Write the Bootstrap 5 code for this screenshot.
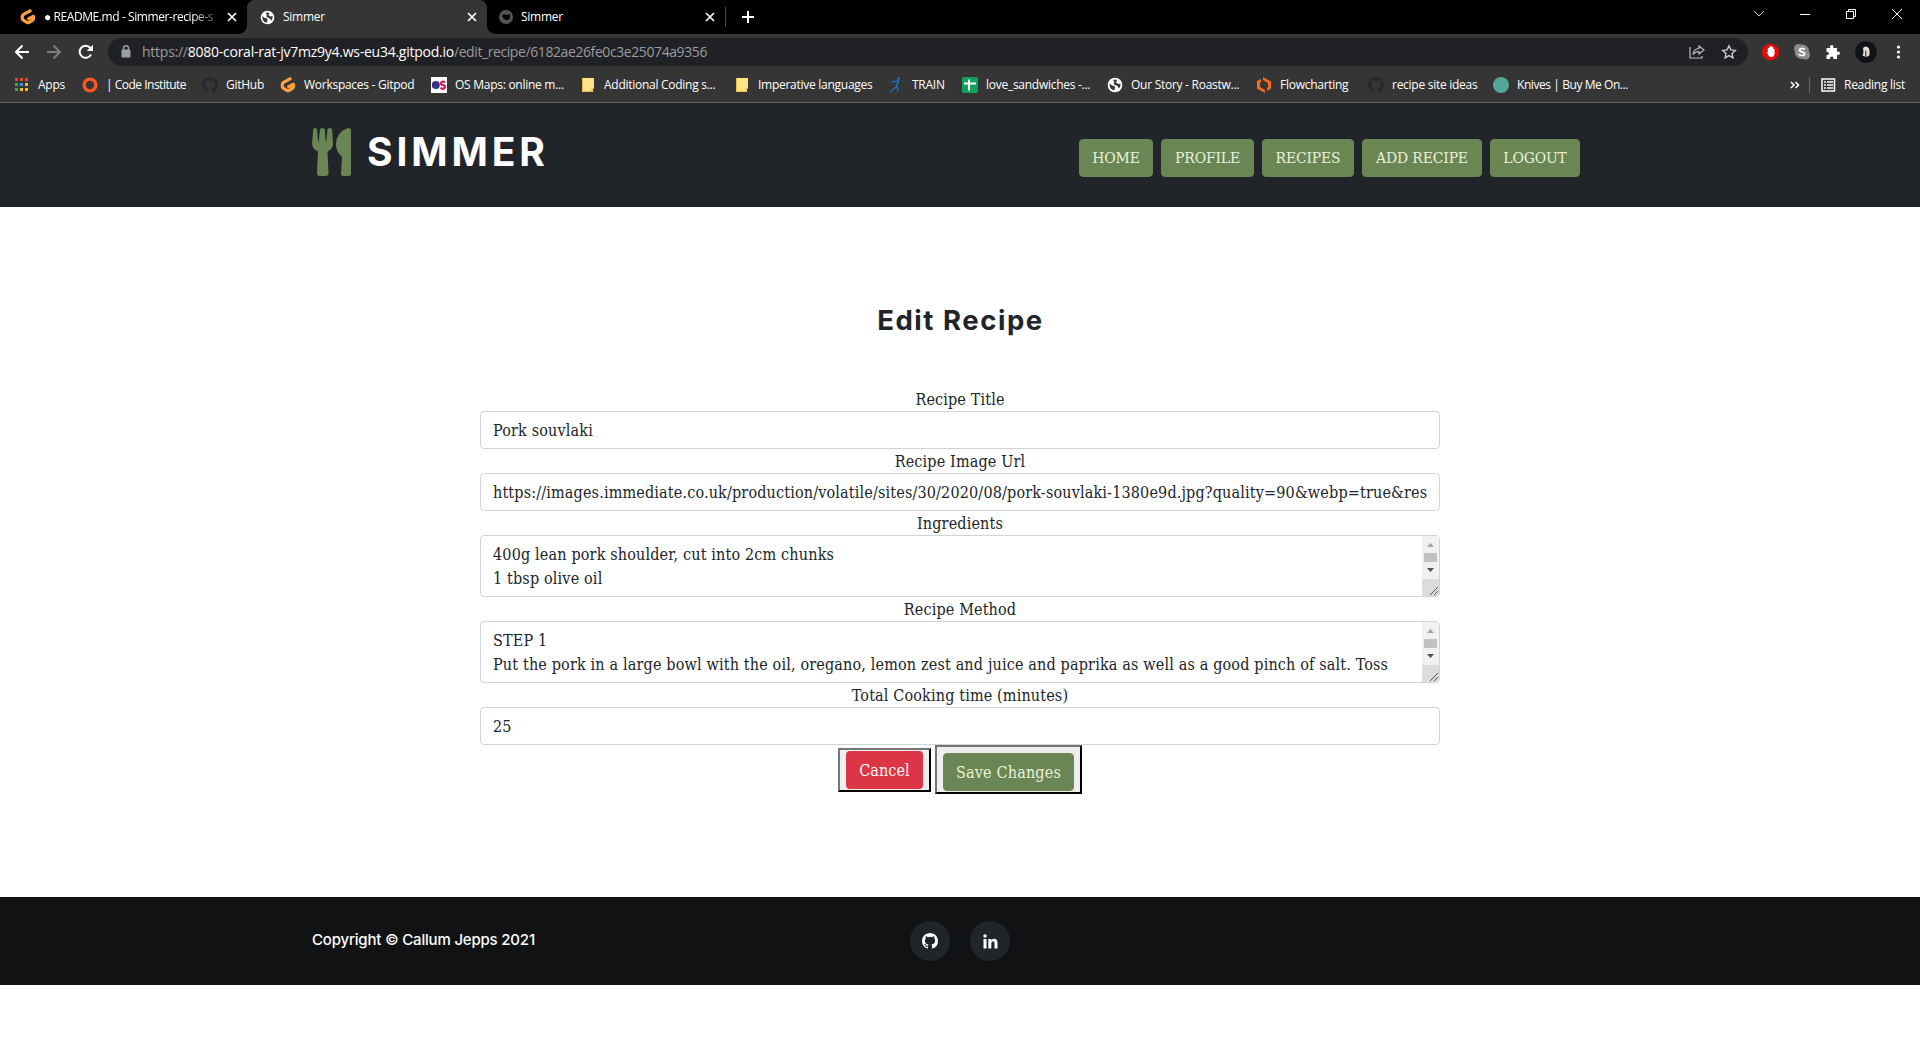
<!DOCTYPE html>
<html lang="en">
<head>
<meta charset="utf-8">
<title>Simmer</title>
<link href="https://cdn.jsdelivr.net/npm/bootstrap@5.3.0/dist/css/bootstrap.min.css" rel="stylesheet">
<style>
:root{--moss:#6b8655;--ink:#212529}
body{font-family:"DejaVu Serif Condensed","DejaVu Serif",serif;font-stretch:condensed;letter-spacing:.15px;color:var(--ink);background:#fff;overflow:hidden}
svg{display:block;flex:none}
/* browser window */
.browser{font:12px/16px "Open Sans",sans-serif;letter-spacing:-.27px;color:#fff;background:#353535;height:103px;border-bottom:1px solid #65666a}
.tabstrip{height:34px;background:#000}
.tab-item{height:34px;padding-right:7px}
.tab-item svg.shut{margin-left:auto}
.tab-a{width:247px;padding-left:20px}
.tab-b{width:240px;padding-left:13px;background:#353535;border-radius:8px 8px 0 0;position:relative}
.tab-b::before,.tab-b::after{content:"";position:absolute;bottom:0;width:8px;height:8px}
.tab-b::before{left:-8px;background:radial-gradient(circle at 0 0,#000 7.5px,#353535 8px)}
.tab-b::after{right:-8px;background:radial-gradient(circle at 100% 0,#000 7.5px,#353535 8px)}
.tab-c{width:238px;padding-left:12px}
.fade-title{width:185px;letter-spacing:-.42px;margin-right:-4px;-webkit-mask:linear-gradient(90deg,#000 84%,rgba(0,0,0,.15))}
.tab-line{width:1px;height:20px;background:#4a4a4a}
.win-ctl{gap:34px;padding-right:17px;padding-bottom:6px}
.toolbar-row{height:35px;padding:0 14px 0 15px}
.omni{width:1640px;height:28px;border-radius:14px;background:#202124;padding:0 11px 0 12px;margin-left:14px;font-size:14px;letter-spacing:-.25px;color:#9a9b9e}
.omni b{font-weight:400;color:#fff}
.omni-path{letter-spacing:-.41px}
.omni-text{margin-left:10px}
.marks{height:31px;padding:0 15px 0 14px}
.bm{display:flex;align-items:center;flex:none;gap:8px;white-space:nowrap}
.bm svg{width:16px}
.bm:nth-child(1){width:68px}.bm:nth-child(2){width:120px;letter-spacing:-.5px}.bm:nth-child(3){width:78px}.bm:nth-child(4){width:151px}
.bm:nth-child(5){width:149px}.bm:nth-child(6){width:154px}.bm:nth-child(7){width:154px}.bm:nth-child(8){width:74px}
.bm:nth-child(9){width:145px}.bm:nth-child(10){width:149px}.bm:nth-child(11){width:112px}.bm:nth-child(12){width:125px}.bm:nth-child(13){width:150px;letter-spacing:-.43px}
/* site header */
.site-head{height:104px;background:var(--ink)}
.brand-word{font:700 39px/48px Inter,sans-serif;letter-spacing:3.9px;color:#fff}
.btn{letter-spacing:0}
.btn-moss{background:var(--moss);color:#e7f2d8;border-color:var(--moss);border-radius:4px}
.site-nav{padding-top:36px;margin-right:28px}
.site-nav .btn{font-size:15.5px;line-height:24px;letter-spacing:-.15px;padding:6px 0;text-align:center}
.w-home{width:74px}.w-prof{width:93px}.w-rec{width:92px}.w-add{width:120px}.w-out{width:90px}
/* form */
.edit-area{height:690px;padding-top:95px}
.edit-area h1{font:700 27.5px/36px Inter,sans-serif;letter-spacing:1.55px;margin-bottom:49px;padding-left:1px}
.recipe-form{width:960px}
.recipe-form label{display:block;line-height:22px;padding-top:2px}
.recipe-form .form-control{border-radius:4px;letter-spacing:.16px;color:var(--ink);border-color:#ced4da;line-height:24px}
.recipe-form input.form-control{height:38px}
.recipe-form textarea.form-control{height:62px;resize:none;overflow:hidden;padding:7px 30px 5px 12px}
.scroller{position:absolute;right:1px;top:1px;width:17px;height:60px}
.push{background:#efefef;border:2px outset #767676;border-color:#767676 #212121 #212121 #767676;padding:1px 6px}
.push .btn{border-radius:4px;padding:7px 0 5px;display:block}
.push-cancel .btn{width:77px;background:#dc3545;color:#fff;letter-spacing:.1px}
.push-save .btn{width:131px;margin-top:4px;letter-spacing:.17px}
.push-save{padding-top:2px}
.push-cancel{margin-top:3px}
/* footer */
.site-foot{height:88px;background:#111214}
.copy-line{font:500 15px/24px Inter,sans-serif;letter-spacing:-.19px;color:#fff;padding-bottom:2px}
.round-link{width:40px;height:40px;border-radius:50%;background:var(--ink)}
</style>
<script src="https://cdn.jsdelivr.net/npm/bootstrap@5.3.0/dist/js/bootstrap.bundle.min.js"></script>
</head>
<body>
<svg width="0" height="0" class="position-absolute">
<symbol id="gitpod" viewBox="0 0 16 16"><path d="M10 1.800 4 5.100Q2.300 6 2.300 7.400V9.600Q2.300 10.600 3.200 11.100L7 13.300Q8 13.900 9 13.300L12.500 11.300Q13.500 10.700 13.500 9.600V7.300L8.700 9.600" fill="none" stroke="#ffa13a" stroke-width="3.200" stroke-linecap="round" stroke-linejoin="round"/></symbol>
<symbol id="globe" viewBox="0 0 16 16"><circle cx="8" cy="8" r="7.300" fill="#fff"/><path d="M2.500 6.500 5 8.500 7.500 9 8 11 7 13.500Q4 13 2.800 10ZM6 3Q9 2 10 3.500L9 5.500 11 7 13.500 6.500Q14 9 12 11.500L10.500 9 8 8 6.500 6.500 7.500 5Z" fill="#353535"/></symbol>
<symbol id="cat" viewBox="0 0 16 16"><path fill="currentColor" d="M8 0C3.580 0 0 3.580 0 8c0 3.540 2.290 6.530 5.470 7.590.4.070.55-.170.55-.380 0-.190-.010-.820-.010-1.490-2.010.370-2.530-.490-2.690-.940-.090-.230-.480-.940-.820-1.130-.280-.150-.680-.520-.010-.530.630-.010 1.080.580 1.230.820.720 1.210 1.870.870 2.330.660.070-.520.280-.870.510-1.070-1.780-.200-3.640-.890-3.640-3.950 0-.870.310-1.590.820-2.150-.080-.200-.360-1.020.080-2.120 0 0 .670-.210 2.200.820a7.600 7.600 0 0 1 4 0c1.530-1.040 2.200-.820 2.200-.820.440 1.100.160 1.920.080 2.120.510.560.820 1.270.820 2.150 0 3.070-1.870 3.750-3.650 3.950.290.250.540.730.540 1.480 0 1.070-.010 1.930-.010 2.200 0 .210.150.460.550.380A8 8 0 0 0 16 8c0-4.420-3.580-8-8-8Z"/></symbol>
<symbol id="shut" viewBox="0 0 16 16"><path d="m4 4 8 8M12 4l-8 8" stroke="#fff" stroke-width="1.700"/></symbol>
<symbol id="note" viewBox="0 0 16 16"><path d="M2 1h12v10l-1 1v3H2z" fill="#ffe48a"/><path d="M2.500 1v13.500H12v-3.200h2" fill="none" stroke="#e9bd43"/></symbol>
<symbol id="bars" viewBox="0 0 17 60"><path fill="#f1f1f1" d="M0 0h17v43H0z"/><path fill="#dcdcdc" d="M0 43h17v15q0 2-2 2H0z"/><path fill="#c1c1c1" d="M2 17h13v9H2z"/><path fill="#a3a3a3" d="m5 11 3.500-4 3.500 4z"/><path fill="#505050" d="m5 32 3.500 4 3.500-4z"/><path d="m8 59 8-8m-4 8 4-4" stroke="#555" stroke-width="1"/></symbol>
</svg>

<div class="browser">
  <div class="tabstrip d-flex align-items-center">
    <div class="tab-item tab-a d-flex align-items-center"><svg width="16" height="16"><use href="#gitpod"/></svg><span class="fade-title text-nowrap ps-2">● README.md - Simmer-recipe-s</span><svg class="shut" width="16" height="16"><use href="#shut"/></svg></div>
    <div class="tab-item tab-b d-flex align-items-center"><svg width="15" height="15"><use href="#globe"/></svg><span class="ms-2">Simmer</span><svg class="shut" width="16" height="16"><use href="#shut"/></svg></div>
    <div class="tab-item tab-c d-flex align-items-center"><svg width="14" height="14" viewBox="0 0 14 14"><circle cx="7" cy="7" r="7" fill="#555"/><path d="M3 6 5 4l2 1 4-1v3q0 3-3 3T3 6Z" fill="#000"/></svg><span class="ms-2">Simmer</span><svg class="shut" width="16" height="16"><use href="#shut"/></svg></div>
    <i class="tab-line"></i>
    <svg class="ms-3" width="12" height="12" viewBox="0 0 12 12"><path d="M6 0v12M0 6h12" stroke="#fff" stroke-width="2"/></svg>
    <div class="win-ctl d-flex align-items-center ms-auto">
      <svg width="12" height="12" viewBox="0 0 12 12"><path d="m1 3 5 5 5-5" fill="none" stroke="#ccc"/></svg>
      <svg width="12" height="12" viewBox="0 0 12 12"><path d="M1 6.500h10" stroke="#fff"/></svg>
      <svg width="12" height="12" viewBox="0 0 12 12"><path d="M1.500 3.500h7v7h-7zM3.500 3V1.500h7v7H9" fill="none" stroke="#fff"/></svg>
      <svg width="12" height="12" viewBox="0 0 12 12"><path d="m1 1 10 10M11 1 1 11" stroke="#fff"/></svg>
    </div>
  </div>
  <div class="toolbar-row d-flex align-items-center">
    <svg width="79" height="16" viewBox="0 0 79 16"><path d="M14 8H1.500M7.500 1.500 1 8l6.500 6.500" fill="none" stroke="#fff" stroke-width="2"/><path d="M32 8h12.500M38.500 1.500 45 8l-6.500 6.500" fill="none" stroke="#7d7d7d" stroke-width="2"/><path d="M76 10.500A6 6 0 1 1 75.300 4" fill="none" stroke="#fff" stroke-width="2"/><path d="M78 .8V7h-6.300z" fill="#fff"/></svg>
    <div class="omni d-flex align-items-center">
      <svg width="12" height="13" viewBox="0 0 12 13"><path d="M2 5h8v7H2z" fill="#9aa0a6" stroke="#9aa0a6"/><path d="M3.500 5V3.300a2.500 2.500 0 0 1 5 0V5" fill="none" stroke="#9aa0a6" stroke-width="1.400"/></svg>
      <span class="omni-text text-nowrap"><span>https://</span><b>8080-coral-rat-jv7mz9y4.ws-eu34.gitpod.io</b><span class="omni-path">/edit_recipe/6182ae26fe0c3e25074a9356</span></span>
      <svg class="ms-auto" width="16" height="14" viewBox="0 0 16 14"><path d="M1 2v11h12v-2M10 1l5 4-5 4V6.500Q6 6.500 4 9.500 4.500 4 10 3.500z" fill="none" stroke="#bbb" stroke-width="1.200"/></svg>
      <svg class="ms-3" width="16" height="16" viewBox="0 0 16 16"><path d="m8 1.800 1.900 4.100 4.400.5-3.300 3 .9 4.400L8 11.600l-3.900 2.200.9-4.400-3.300-3 4.400-.5z" fill="none" stroke="#ccc" stroke-width="1.400"/></svg>
    </div>
    <svg class="ms-auto" width="147" height="22" viewBox="0 0 147 22">
      <path d="M8 3h6.600L20 7.700v6.600L14.600 19H8l-4.800-4.700V7.700z" fill="#e40d0d"/><path d="M7.500 10.500 8.800 11.500V7h1.400V5.500h1.400V5h1.300v1h1.400v2h1.200v4.500q0 3.500-3.300 3.500-1.900 0-2.700-1.500z" fill="#fff"/>
      <circle cx="39.500" cy="7.500" r="4.500" fill="#8b8b8b"/><circle cx="46.500" cy="14" r="4.500" fill="#8b8b8b"/><circle cx="43" cy="10.800" r="7.300" fill="#8b8b8b"/><path d="M45.700 8.500Q44.800 7.300 43 7.300t-2.500 1.600q0 1.300 2.500 1.900t2.700 2q-.2 1.700-2.700 1.700t-3-1.500" fill="none" stroke="#fff" stroke-width="1.700"/>
      <path d="M67.500 7h3.700q-.7-3 1.500-3t1.600 3H78v3.700q3-.6 3 1.500t-3 1.600V18h-3.700q.4-2.600-1.600-2.600T71.200 18h-3.700v-3.800q2.500 0 2.500-1.700t-2.500-1.800z" fill="#fff"/>
      <circle cx="107" cy="11" r="10.800" fill="#111218"/><path d="M104 7q2-2.500 4.500-1 2 1 2 4v4l-1.500 1.500h-3l-2.500-1 1-3z" fill="#e4dcd6"/><path d="M106 15V9.500h1.500V15z" fill="#6b5b54"/>
      <circle cx="139.500" cy="6" r="1.600" fill="#fff"/><circle cx="139.500" cy="11" r="1.600" fill="#fff"/><circle cx="139.500" cy="16" r="1.600" fill="#fff"/>
    </svg>
  </div>
  <div class="marks d-flex align-items-center">
    <div class="bm"><svg height="16" viewBox="0 0 16 16"><path d="M1 1h3v3H1zm5 0h3v3H6zm5 0h3v3h-3z" fill="#e8453c"/><path d="M1 6h3v3H1z" fill="#3ca55c"/><path d="M6 6h3v3H6z" fill="#4a88ee"/><path d="M11 6h3v3h-3zm0 5h3v3h-3z" fill="#f8bd19"/><path d="M1 11h3v3H1z" fill="#3ca55c"/><path d="M6 11h3v3H6z" fill="#f8bd19"/></svg>Apps</div>
    <div class="bm"><svg height="16" viewBox="0 0 16 16"><circle cx="8" cy="8" r="5.900" fill="none" stroke="#ff5722" stroke-width="3.400"/></svg>| Code Institute</div>
    <div class="bm"><svg height="16" color="#24292e"><use href="#cat"/></svg>GitHub</div>
    <div class="bm"><svg height="16"><use href="#gitpod"/></svg>Workspaces - Gitpod</div>
    <div class="bm"><svg height="16" viewBox="0 0 16 16"><path d="M0 0h16v16H0z" fill="#fff"/><circle cx="4.800" cy="8" r="4" fill="#37308c"/><path d="M14 5.500Q13 4.500 11.800 4.500T10 6t2 2 2 2-2 1.800-2.500-1.200" fill="none" stroke="#d11f54" stroke-width="2.200"/></svg>OS Maps: online m...</div>
    <div class="bm"><svg height="16"><use href="#note"/></svg>Additional Coding s...</div>
    <div class="bm"><svg height="16"><use href="#note"/></svg>Imperative languages</div>
    <div class="bm"><svg height="16" viewBox="0 0 16 16"><circle cx="10.500" cy="1.500" r="1.300" fill="#1772c4"/><path d="m3.500 5 7-1.200L8.500 9.500 2 15.500" fill="none" stroke="#1772c4" stroke-width="1.300"/><path d="m10.500 4-2 5.500 1.500 1.500-.8 3.500" fill="none" stroke="#1772c4" stroke-width="1.400"/></svg>TRAIN</div>
    <div class="bm"><svg height="16" viewBox="0 0 16 16"><rect width="16" height="16" rx="1.500" fill="#12a05c"/><path d="M7 2.500v11M2 6.500h12" stroke="#fff" stroke-width="2"/></svg>love_sandwiches -...</div>
    <div class="bm"><svg height="16"><use href="#globe"/></svg>Our Story - Roastw...</div>
    <div class="bm"><svg height="16" viewBox="0 0 16 16"><path d="M1 4 5 2v3L4 6v4l5 3v3l-8-4.500zM7 0l8 4.500v7L11 14v-3l1-.8V6L7 3z" fill="#f96b13"/></svg>Flowcharting</div>
    <div class="bm"><svg height="16" color="#24292e"><use href="#cat"/></svg>recipe site ideas</div>
    <div class="bm"><svg height="16" viewBox="0 0 16 16"><circle cx="8" cy="8" r="8" fill="#55a79b"/></svg>Knives | Buy Me On...</div>
    <svg class="ms-auto" width="46" height="16" viewBox="0 0 46 16"><path d="m1 5 3 3-3 3M5.500 5l3 3-3 3" fill="none" stroke="#fff" stroke-width="1.600"/><path d="M19.500 0v16" stroke="#666"/><path d="M32 2h12.500v12H32z" fill="none" stroke="#fff" stroke-width="1.500"/><path d="M34 5h2m1 0h6m-9 3h2m1 0h6m-9 3h2m1 0h6" stroke="#fff" stroke-width="1.500"/></svg>
    <span class="ms-2">Reading list</span>
  </div>
</div>

<header class="site-head">
  <div class="container d-flex">
    <div class="d-flex align-items-center pt-4">
      <svg width="39" height="48" viewBox="0 0 39 48"><path fill="#6b8655" d="M2.500 0Q5 0 5 1.500L6 13q.2 2 .7 0L8 1.500Q8 0 10.300 0T12.700 1.500l1 11.500q.3 2 .7 0L15.500 1.500Q15.500 0 17.700 0 20 0 20.200 2l.8 13q.3 6-5.500 8.500L16.500 45q0 3-2.700 3H7.500Q5 48 5 45l1-21.500Q0 21 .1 15L1.200 2Q1.500 0 2.500 0ZM36 0Q39 0 39 2.500V45.500Q39 48 36.500 48h-5Q29 48 29 45.500L30 29Q24 24 24 16 24.500 4 36 0Z"/></svg>
      <span class="brand-word ms-3">SIMMER</span>
    </div>
    <nav class="site-nav d-flex align-items-start gap-2 ms-auto">
      <a class="btn btn-moss w-home">HOME</a><a class="btn btn-moss w-prof">PROFILE</a><a class="btn btn-moss w-rec">RECIPES</a><a class="btn btn-moss w-add">ADD RECIPE</a><a class="btn btn-moss w-out">LOGOUT</a>
    </nav>
  </div>
</header>

<main class="edit-area text-center">
  <h1>Edit Recipe</h1>
  <form class="recipe-form mx-auto">
    <label for="f1">Recipe Title</label>
    <input id="f1" class="form-control" value="Pork souvlaki">
    <label for="f2">Recipe Image Url</label>
    <input id="f2" class="form-control" value="https://images.immediate.co.uk/production/volatile/sites/30/2020/08/pork-souvlaki-1380e9d.jpg?quality=90&amp;webp=true&amp;resize=300,272">
    <label for="f3">Ingredients</label>
    <div class="position-relative"><textarea id="f3" class="form-control">400g lean pork shoulder, cut into 2cm chunks
1 tbsp olive oil</textarea><svg class="scroller"><use href="#bars"/></svg></div>
    <label for="f4">Recipe Method</label>
    <div class="position-relative"><textarea id="f4" class="form-control">STEP 1
Put the pork in a large bowl with the oil, oregano, lemon zest and juice and paprika as well as a good pinch of salt. Toss</textarea><svg class="scroller"><use href="#bars"/></svg></div>
    <label for="f5">Total Cooking time (minutes)</label>
    <input id="f5" class="form-control" value="25">
    <div class="d-flex justify-content-center align-items-start gap-1">
      <button type="button" class="push push-cancel"><span class="btn">Cancel</span></button>
      <button type="button" class="push push-save"><span class="btn btn-moss">Save Changes</span></button>
    </div>
  </form>
</main>

<footer class="site-foot">
  <div class="container d-flex h-100">
    <div class="row w-100 align-items-center gx-0">
      <div class="col-4 copy-line">Copyright © Callum Jepps 2021</div>
      <div class="col-4 d-flex justify-content-center">
        <a class="round-link d-flex align-items-center justify-content-center me-3 text-white"><svg width="16" height="16"><use href="#cat"/></svg></a>
        <a class="round-link d-flex align-items-center justify-content-center ms-1 text-white"><svg width="15" height="15" viewBox="0 0 15 15"><path fill="#fff" d="M.5 5h3v9.500h-3zM5.300 5h2.900v1.300Q9 4.800 11 4.800q3.500 0 3.500 4v5.700h-3V9.500q0-2.200-1.500-2.200-1.700 0-1.700 2.200v5h-3z"/><circle cx="2" cy="2" r="1.750" fill="#fff"/></svg></a>
      </div>
    </div>
  </div>
</footer>
</body>
</html>
